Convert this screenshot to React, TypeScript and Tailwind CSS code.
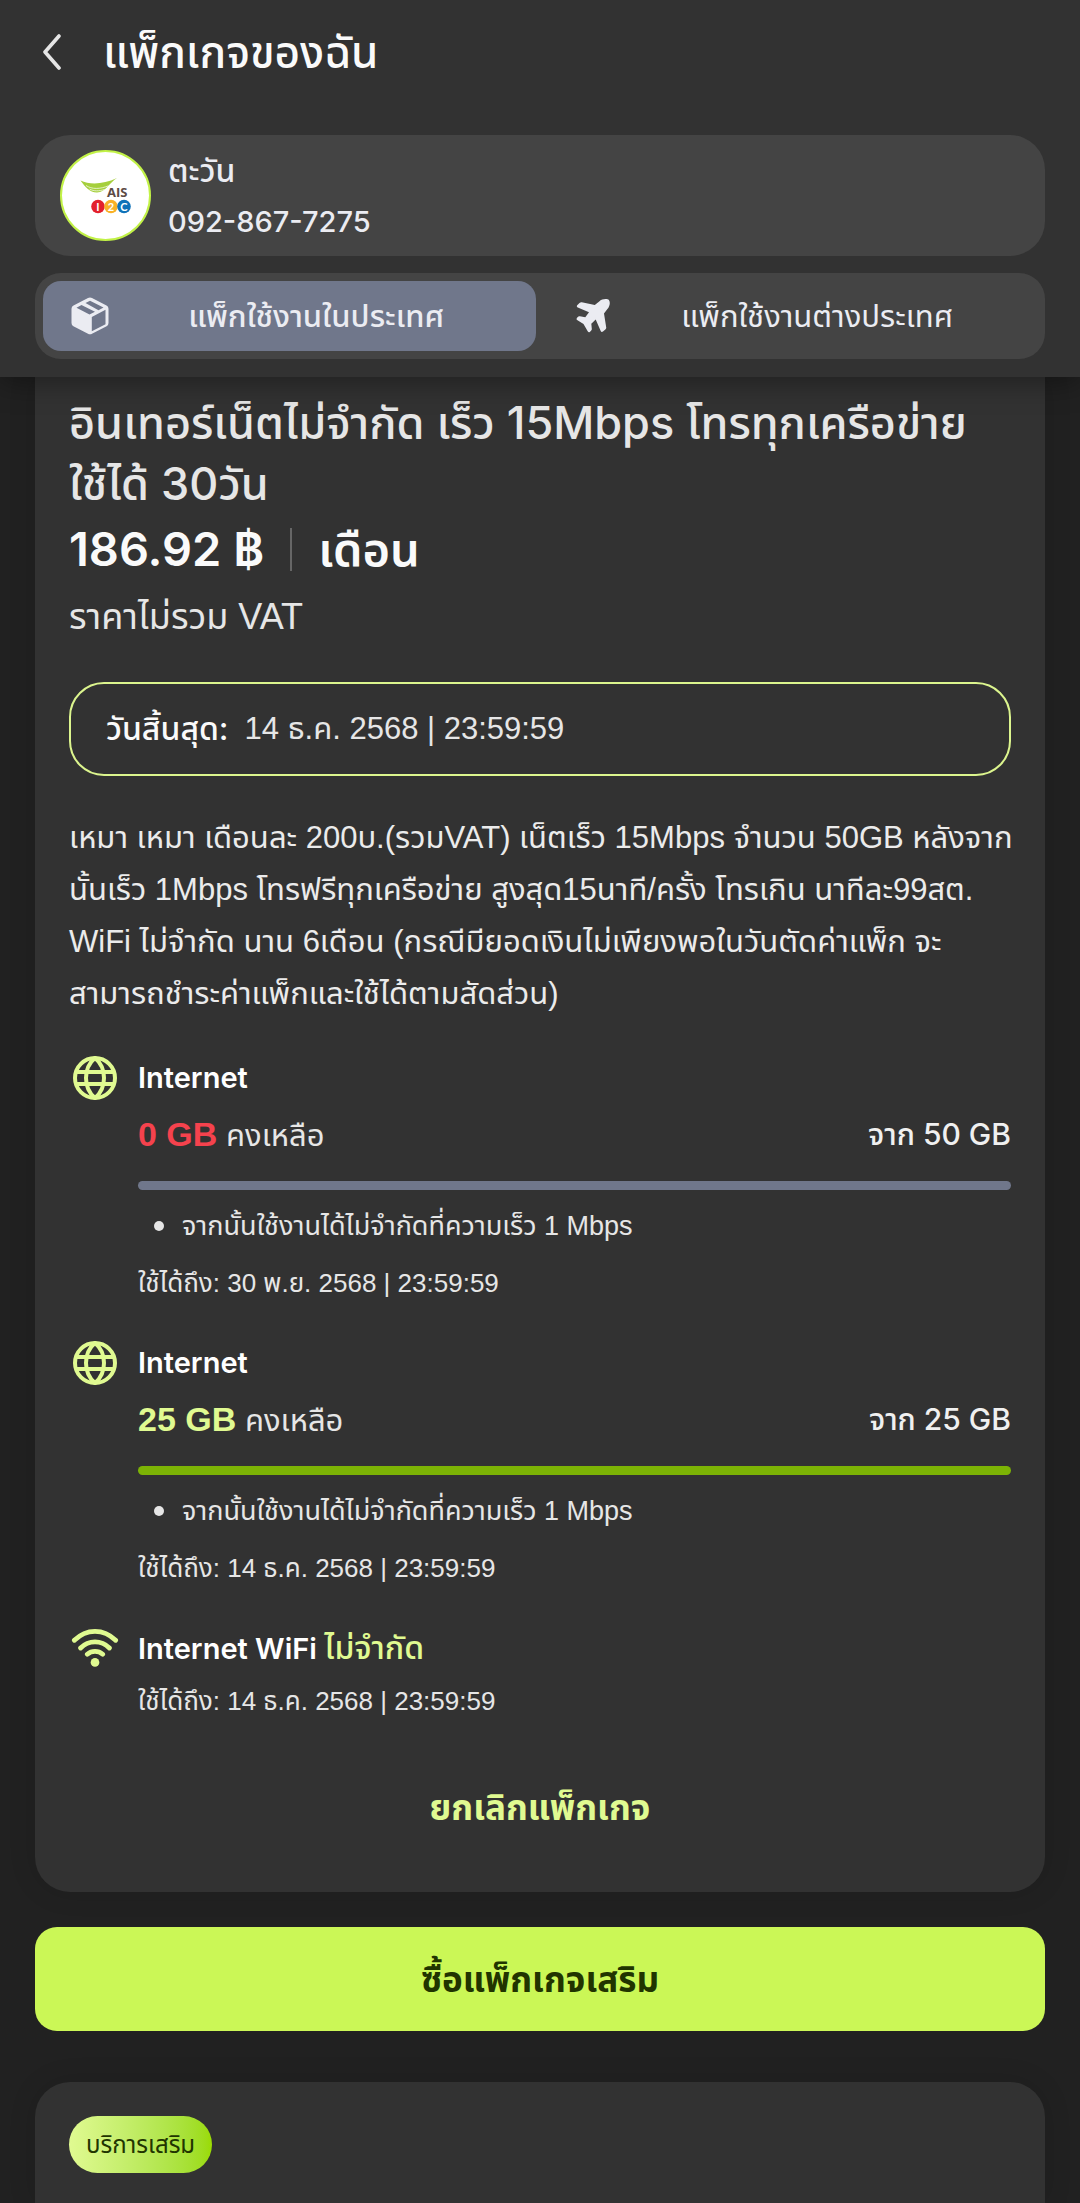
import type { ReactNode } from "react";

const REGULAR = "font-['Liberation_Sans','Noto_Sans_Thai',sans-serif]";
const STRONG = "font-['Inter','Noto_Sans_Thai',sans-serif]";

function Globe() {
  return (
    <svg viewBox="0 0 44 44" className="size-11" fill="none" stroke="#e0fa91" strokeWidth="4" aria-hidden="true">
      <circle cx="22" cy="22" r="20" />
      <path d="M22 2C10 12 10 32 22 42C34 32 34 12 22 2ZM3.500 16H40.500M3.500 28H40.500" />
    </svg>
  );
}

function Wifi() {
  return (
    <svg viewBox="0 0 50 44" className="h-11 w-12" fill="none" stroke="#e0fa91" strokeWidth="5" strokeLinecap="round" aria-hidden="true">
      <path d="M3.500 14C16 1.500 34 1.500 46.500 14M10 22C18.500 13.500 31.500 13.500 40 22M17 28.500C21.500 24.500 28.500 24.500 33 28.500" />
      <circle cx="25" cy="37" r="4.500" fill="#e0fa91" stroke="none" />
    </svg>
  );
}

function BoxIcon() {
  return (
    <svg viewBox="0 0 38 38" className="size-[38px]" fill="#ebecf2" aria-hidden="true">
      <path
        fillRule="evenodd"
        d="M19 .5Q20 .5 21 1L35.500 8.500Q37.500 9.600 37.500 11.800V26Q37.500 28.200 35.600 29.200L21 36.800Q19 37.800 17 36.800L2.400 29.200Q.5 28.200.5 26V11.800Q.5 9.600 2.500 8.500L17 1Q18 .5 19 .5ZM5.500 10.800L10.500 8L24 14.800L18.500 17.500ZM14.500 6L19 3.700L32.500 10.500L27.500 13.200ZM20.800 20L34.500 12.800V27.200L20.800 34.200Z"
      />
    </svg>
  );
}

function Plane() {
  return (
    <svg viewBox="0 0 34 34" className="size-[34px]" fill="#ebecf2" aria-hidden="true">
      <path d="M33 1.200C31.500-.5 26-.3 23.200 2.500L18.800 6L5.800 3.200Q4.500 3 3.500 4L1.200 6.300Q.2 7.600 1.800 8.500L13 13.200L9.300 18.300L3.800 17.200Q2.500 17 1.700 18L.8 19.200Q0 20.300 1.500 21.200L7.500 25L11.700 32.200Q12.600 33.800 13.800 32.900L15 31.800Q16 31 15.800 29.700L15.300 24.700L19.700 20.600L24.700 32Q25.500 33.800 27 32.600L29.600 30.200Q30.400 29.400 30.200 28.200L28 14.500L31.400 10C34 7.200 34.400 2.800 33 1.200Z" />
    </svg>
  );
}

function Avatar() {
  return (
    <svg viewBox="0 0 91 91" className="size-[91px] shrink-0" role="img" aria-label="AIS i2C">
      <circle cx="45.500" cy="45.500" r="44.500" fill="#fff" stroke="#c2f247" strokeWidth="2" />
      <path d="M20.500 30.500C30 35 43 34.500 57 28C50 32 45.500 42.500 37 42.500C29.500 42.500 25 36.500 20.500 30.500Z" fill="#a5cf3c" />
      <path d="M26 35.500C32 39.500 40 39.200 48.500 35.800M29.500 39C34 41.500 39 41.200 44.500 39.500" fill="none" stroke="#fff" strokeWidth="0.7" />
      <text x="47" y="47" fill="#5d4a45" className="font-['Open_Sans',sans-serif] text-[13px] font-bold">AIS</text>
      <circle cx="38" cy="56.500" r="6.800" fill="#e3202c" />
      <circle cx="51" cy="56.500" r="6.800" fill="#f9b127" />
      <circle cx="64" cy="56.500" r="6.800" fill="#0f72b9" />
      <g fill="#fff" textAnchor="middle" className="font-['Lato',sans-serif] text-[11px] font-bold">
        <text x="38" y="60.500">I</text>
        <text x="51" y="60.500">2</text>
        <text x="64" y="60.500">C</text>
      </g>
    </svg>
  );
}

function Item({ icon, title, children }: { icon: ReactNode; title: ReactNode; children: ReactNode }) {
  return (
    <section className="mt-8 first:mt-9">
      <div className="flex h-11 items-center">
        <div className="flex w-[51px] justify-center">{icon}</div>
        <h3 className={`${STRONG} ml-[18px] text-[29px] leading-11 font-semibold text-white`}>{title}</h3>
      </div>
      <div className="ml-[69px]">{children}</div>
    </section>
  );
}

function Until({ children }: { children: ReactNode }) {
  return <p className={`${REGULAR} mt-[5px] text-[26px] leading-[52px]`}>{children}</p>;
}

function Quota({ left, total, until, tone, bar }: { left: string; total: string; until: string; tone: string; bar: string }) {
  return (
    <Item icon={<Globe />} title="Internet">
      <div className="flex h-[68px] items-center justify-between">
        <p className={`${REGULAR} text-[31px]`}>
          <strong className={`${tone} text-[34px] font-bold`}>{left}</strong> คงเหลือ
        </p>
        <p className={`${STRONG} text-[30px] font-medium text-[#f0f0f0]`}>จาก {total}</p>
      </div>
      <div className={`${bar} mt-[13px] h-[9px] rounded-full`} />
      <ul className="mt-[10px]">
        <li className={`${REGULAR} flex items-center text-[27px] leading-[52px]`}>
          <span className="mr-[18px] ml-4 size-[10px] rounded-full bg-[#e6e6e6]" />
          จากนั้นใช้งานได้ไม่จำกัดที่ความเร็ว 1 Mbps
        </li>
      </ul>
      <Until>{until}</Until>
    </Item>
  );
}

export default function App() {
  return (
    <div className={`${REGULAR} flex min-h-screen flex-col bg-[#212121] whitespace-nowrap text-[#e6e6e6]`}>
      <header className="relative bg-[#323232] px-[35px] pb-[18px] shadow-[0_4px_28px_rgba(0,0,0,0.4)]">
        <div className="flex h-[104px] items-center">
          <button type="button" aria-label="ย้อนกลับ" className="ml-2">
            <svg viewBox="0 0 18 36" className="h-9 w-[18px]" fill="none" stroke="#e6e6e6" strokeWidth="3.6" strokeLinecap="round" strokeLinejoin="round">
              <path d="M16 2L2 18L16 34" />
            </svg>
          </button>
          <h1 className={`${STRONG} ml-[42px] text-[44px] leading-[60px] font-medium text-[#fafafa]`}>แพ็กเกจของฉัน</h1>
        </div>
        <div className="mt-[31px] flex h-[121px] items-center rounded-[35px] bg-[#444] pl-[25px]">
          <Avatar />
          <div className={`${STRONG} ml-[17px] text-[29px] leading-[51px] font-medium text-[#ebecf2]`}>
            <p className="text-[32px]">ตะวัน</p>
            <p>092-867-7275</p>
          </div>
        </div>
        <div role="tablist" className="mt-[17px] grid h-[86px] grid-cols-2 gap-[9px] rounded-[26px] bg-[#444] p-2 text-[#ebecf2]">
          <button type="button" role="tab" aria-selected="true" className="flex items-center rounded-[18px] bg-[#70778b] pr-3 pl-7">
            <BoxIcon />
            <span className={`${STRONG} flex-1 text-[31px] font-medium`}>แพ็กใช้งานในประเทศ</span>
          </button>
          <button type="button" role="tab" aria-selected="false" className="flex items-center rounded-[18px] pr-3 pl-[31px]">
            <Plane />
            <span className={`${STRONG} flex-1 text-[31px]`}>แพ็กใช้งานต่างประเทศ</span>
          </button>
        </div>
      </header>

      <main className="flex grow flex-col px-[35px]">
        <article className="rounded-b-[35px] bg-[#323232] px-[34px] pt-[15px] pb-[55px] shadow-[0_0_28px_rgba(0,0,0,0.12)]">
          <h2 className={`${STRONG} text-[45px] leading-[61px] font-medium`}>
            อินเทอร์เน็ตไม่จำกัด เร็ว 15Mbps โทรทุกเครือข่าย
            <br />
            ใช้ได้ 30วัน
          </h2>
          <div className={`${STRONG} flex h-[70px] items-center text-[47px] font-semibold text-[#fafafa]`}>
            <span>186.92 ฿</span>
            <span className="mx-[26px] h-[43px] w-[2px] bg-[#666]" />
            <span>เดือน</span>
          </div>
          <p className="text-[36px] leading-[66px]">ราคาไม่รวม VAT</p>
          <div className="mt-8 flex h-[94px] items-center gap-4 rounded-[35px] border-2 border-[#dcf58e] px-[35px]">
            <span className={`${STRONG} text-[32px] font-medium text-[#fafafa]`}>วันสิ้นสุด:</span>
            <span className="text-[31px]">14 ธ.ค. 2568 | 23:59:59</span>
          </div>
          <p className="mt-9 text-[31px] leading-[52px] text-[#ebebeb]">
            เหมา เหมา เดือนละ 200บ.(รวมVAT) เน็ตเร็ว 15Mbps จำนวน 50GB หลังจาก
            <br />
            นั้นเร็ว 1Mbps โทรฟรีทุกเครือข่าย สูงสุด15นาที/ครั้ง โทรเกิน นาทีละ99สต.
            <br />
            WiFi ไม่จำกัด นาน 6เดือน (กรณีมียอดเงินไม่เพียงพอในวันตัดค่าแพ็ก จะ
            <br />
            สามารถชำระค่าแพ็กและใช้ได้ตามสัดส่วน)
          </p>
          <div>
            <Quota left="0 GB" total="50 GB" until="ใช้ได้ถึง: 30 พ.ย. 2568 | 23:59:59" tone="text-[#f5424d]" bar="bg-[#70778b]" />
            <Quota left="25 GB" total="25 GB" until="ใช้ได้ถึง: 14 ธ.ค. 2568 | 23:59:59" tone="text-[#e0fa91]" bar="bg-[#7cb305]" />
            <Item icon={<Wifi />} title={<>Internet WiFi <span className="text-[32px] font-medium text-[#e0fa91]">ไม่จำกัด</span></>}>
              <Until>ใช้ได้ถึง: 14 ธ.ค. 2568 | 23:59:59</Until>
            </Item>
          </div>
          <button type="button" className={`${STRONG} mx-auto mt-[50px] block text-[35px] leading-[60px] font-bold text-[#e0fa91]`}>
            ยกเลิกแพ็กเกจ
          </button>
        </article>
        <button type="button" className={`${STRONG} mt-[35px] h-[104px] rounded-[22px] bg-[#cbf756] text-[35px] font-bold text-[#213400]`}>
          ซื้อแพ็กเกจเสริม
        </button>
        <section className="mt-[51px] grow rounded-t-[35px] bg-[#323232] px-[34px] pt-[34px] pb-7 shadow-[0_0_28px_rgba(0,0,0,0.12)]">
          <span className={`${STRONG} inline-flex h-[57px] items-center rounded-full bg-linear-to-r from-[#e0fa91] to-[#9adb00] px-[17px] text-[24px] text-[#213400]`}>
            บริการเสริม
          </span>
        </section>
      </main>
    </div>
  );
}
